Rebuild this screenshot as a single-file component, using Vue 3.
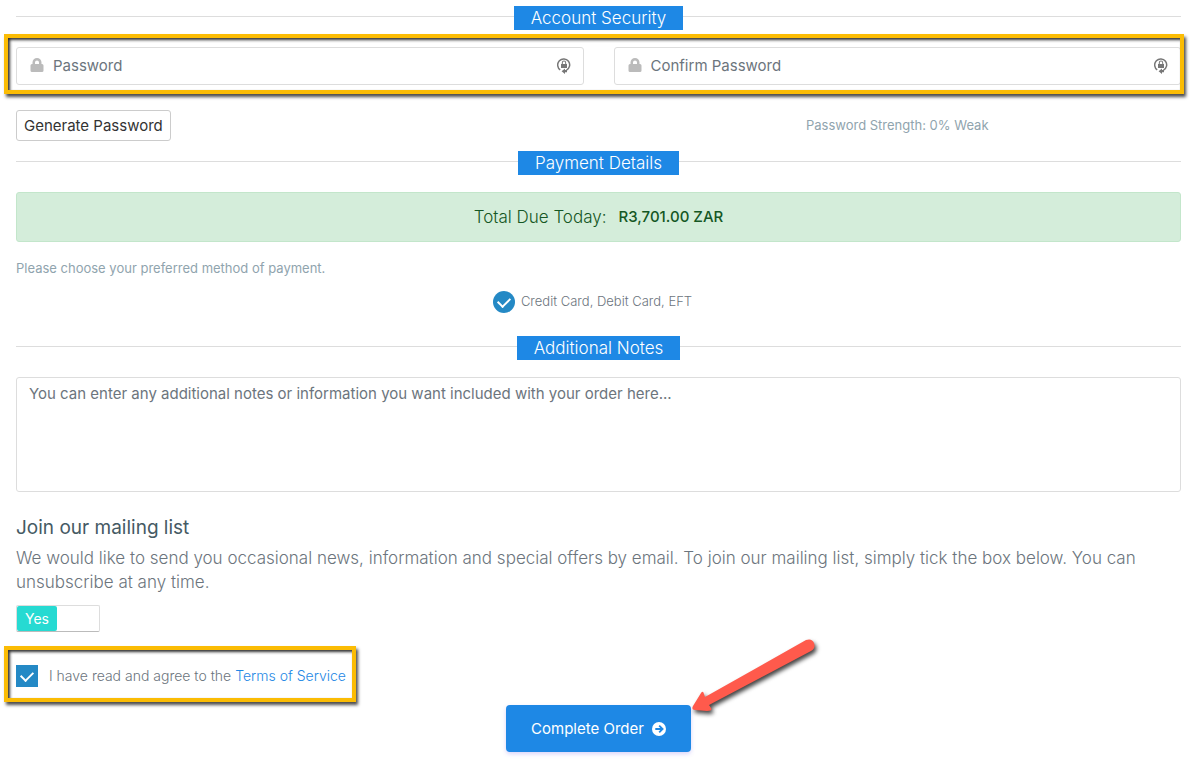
<script setup>
import { ref } from 'vue'

const password = ref('')
const confirmation = ref('')
const notes = ref('')
const mailingList = ref(true)
const agreed = ref(true)
const method = ref('card')
</script>

<template>
  <form class="checkout" @submit.prevent>
    <h2 class="heading"><span>Account Security</span></h2>
    <div class="fields highlight">
      <div class="field">
        <svg class="lock" viewBox="0 0 14 16" aria-hidden="true">
          <path d="M2.500 6V4.500a4.500 4.500 0 0 1 9 0V6h.5a1.500 1.500 0 0 1 1.500 1.500v5a1.500 1.500 0 0 1-1.500 1.500H2a1.500 1.500 0 0 1-1.500-1.500v-5A1.500 1.500 0 0 1 2 6zM5 6h4V4.500a2 2 0 0 0-4 0z" />
        </svg>
        <input v-model="password" type="password" placeholder="Password" aria-label="Password" />
        <svg class="manager" viewBox="0 0 14 18" aria-hidden="true">
          <path class="ring" d="M3.200 12.800A6 6 0 1 1 9.500 13.200" />
          <path d="M4.800 7V5.700a2.200 2.200 0 0 1 4.400 0V7h.8v4H4V7zM5.800 7h2.400V5.800a1.200 1.200 0 0 0-2.400 0z" />
          <path d="M4.600 14.200 8 11.500v1.500h2v2.200H8v1.800z" />
        </svg>
      </div>
      <div class="field">
        <svg class="lock" viewBox="0 0 14 16" aria-hidden="true">
          <path d="M2.500 6V4.500a4.500 4.500 0 0 1 9 0V6h.5a1.500 1.500 0 0 1 1.500 1.500v5a1.500 1.500 0 0 1-1.500 1.500H2a1.500 1.500 0 0 1-1.500-1.500v-5A1.500 1.500 0 0 1 2 6zM5 6h4V4.500a2 2 0 0 0-4 0z" />
        </svg>
        <input v-model="confirmation" type="password" placeholder="Confirm Password" aria-label="Confirm Password" />
        <svg class="manager" viewBox="0 0 14 18" aria-hidden="true">
          <path class="ring" d="M3.200 12.800A6 6 0 1 1 9.500 13.200" />
          <path d="M4.800 7V5.700a2.200 2.200 0 0 1 4.400 0V7h.8v4H4V7zM5.800 7h2.400V5.800a1.200 1.200 0 0 0-2.400 0z" />
          <path d="M4.600 14.200 8 11.500v1.500h2v2.200H8v1.800z" />
        </svg>
      </div>
    </div>
    <div class="strength-row">
      <div><button type="button" class="generate">Generate Password</button></div>
      <p class="strength">Password Strength: 0% Weak</p>
    </div>

    <h2 class="heading"><span>Payment Details</span></h2>
    <div class="total"><span>Total Due Today:</span><strong>R3,701.00 ZAR</strong></div>
    <p class="hint">Please choose your preferred method of payment.</p>
    <label class="method">
      <input v-model="method" type="radio" name="method" value="card" />
      <span>Credit Card, Debit Card, EFT</span>
    </label>

    <h2 class="heading"><span>Additional Notes</span></h2>
    <textarea
      v-model="notes"
      class="notes"
      aria-label="Additional Notes"
      placeholder="You can enter any additional notes or information you want included with your order here..."
    ></textarea>

    <h3 class="subheading">Join our mailing list</h3>
    <p class="copy">
      We would like to send you occasional news, information and special offers by email. To join our mailing list,
      simply tick the box below. You can unsubscribe at any time.
    </p>
    <label class="switch">
      <input v-model="mailingList" type="checkbox" aria-label="Join our mailing list" />
      <span>{{ mailingList ? 'Yes' : 'No' }}</span>
    </label>

    <div class="terms highlight">
      <input id="tos" v-model="agreed" type="checkbox" />
      <label for="tos">I have read and agree to the <a href="#terms">Terms of Service</a></label>
    </div>

    <div class="submit">
      <button type="submit">
        Complete Order
        <svg viewBox="0 0 14 14" aria-hidden="true">
          <circle cx="7" cy="7" r="7" />
          <path d="M3.300 7h7M7.200 3.600 10.600 7l-3.400 3.400" />
        </svg>
      </button>
      <svg class="arrow" viewBox="0 0 136 84" aria-hidden="true">
        <path d="M2 71 10 58Q12 55 13 59L14 62 115 5Q121 3 123 8Q125 13 120 16L18 70 20 73Q22 76 16 76L4 75Q0 75 2 71Z" />
      </svg>
    </div>
  </form>
</template>

<style>
body {
  margin: 0;
  background: #fff;
}
</style>

<style scoped>
.checkout {
  display: flex;
  flex-direction: column;
  padding: 6px 9px 14px 16px;
  font-family: Inter, "Open Sans", sans-serif;
  font-size: 15px;
  line-height: 24px;
  color: #6c757d;
}
.checkout * {
  box-sizing: border-box;
}
button,
input,
textarea {
  margin: 0;
  font: inherit;
}
h2,
h3,
p {
  margin: 0;
}
.heading {
  display: flex;
  justify-content: center;
  background: linear-gradient(#ddd, #ddd) 0 10px / 100% 1px no-repeat;
  font-size: 17px;
  font-weight: 300;
  color: #fff;
}
.heading span {
  padding: 0 17px;
  background: #1e88e5;
}
.highlight {
  position: relative;
}
.highlight::after {
  content: "";
  position: absolute;
  inset: -13px -3px -9px -12px;
  border: 4px solid #fbbc04;
  box-shadow: 2px 3px 3px #222c, inset 2px 2px 3px #111d;
  pointer-events: none;
}
.fields {
  display: grid;
  grid-template-columns: 1fr 1fr;
  gap: 30px;
  margin-top: 17px;
}
.field {
  display: flex;
  align-items: center;
  height: 38px;
  padding: 0 12px 0 13px;
  border: 1px solid #ddd;
  border-radius: 3px;
}
.field input {
  flex: 1;
  min-width: 0;
  padding: 0 9px;
  border: 0;
  outline: 0;
  background: none;
  color: #495057;
}
::placeholder {
  color: #6c757d;
  opacity: 1;
}
.lock {
  width: 14px;
  height: 16px;
  fill: #bbb;
}
.manager {
  width: 14px;
  height: 18px;
  fill: #777;
}
.ring {
  fill: none;
  stroke: #777;
  stroke-width: 1.5;
}
.strength-row {
  display: grid;
  grid-template-columns: 1fr 1fr;
  column-gap: 30px;
  margin: 25px 0 10px;
}
.generate {
  display: block;
  height: 31px;
  padding: 0 7px;
  border: 1px solid #ccc;
  border-radius: 3px;
  background: #fff;
  color: #333;
}
.strength {
  line-height: 31px;
  text-align: center;
  font-size: 13px;
  color: #90a4ae;
}
.total {
  display: flex;
  justify-content: center;
  gap: 12px;
  margin-top: 17px;
  padding: 12px;
  border: 1px solid #c3e6cb;
  border-radius: 3px;
  background: #d4edda;
  color: #155724;
  font-size: 17px;
  font-weight: 300;
}
.total strong {
  font-size: 15px;
  font-weight: 500;
}
.hint {
  margin-top: 14px;
  font-size: 13px;
  color: #90a4ae;
}
.method {
  display: flex;
  justify-content: center;
  gap: 6px;
  margin: 11px 0 23px;
  padding-right: 12px;
  line-height: 20px;
  font-size: 13px;
  font-weight: 300;
}
.method input,
.terms input {
  appearance: none;
  flex: none;
  width: 22px;
  height: 22px;
  background: #2489c5;
  display: grid;
  place-items: center;
}
.method input {
  border-radius: 50%;
}
.method input::before,
.terms input::before {
  content: "";
  width: 10px;
  height: 6px;
  margin-bottom: 3px;
  border: solid #fff;
  border-width: 0 0 2px 2px;
  rotate: -45deg;
  visibility: hidden;
}
.method input:checked::before,
.terms input:checked::before {
  visibility: visible;
}
.notes {
  height: 115px;
  margin-top: 17px;
  padding: 4px 12px;
  border: 1px solid #ddd;
  border-radius: 3px;
  resize: none;
  color: #495057;
}
.subheading {
  margin-top: 24px;
  font-size: 19px;
  font-weight: 400;
  color: #455a64;
}
.copy {
  margin-top: 6px;
  font-size: 17px;
  font-weight: 300;
}
.switch {
  position: relative;
  width: 84px;
  height: 27px;
  margin-top: 11px;
  border: 1px solid #ddd;
  border-bottom-color: #bbb;
  border-radius: 2px;
}
.switch input {
  position: absolute;
  inset: 0;
  opacity: 0;
}
.switch span {
  display: block;
  width: 40px;
  border-radius: 2px;
  background: #26dad2;
  color: #fff;
  font-size: 14px;
  line-height: 25px;
  text-align: center;
}
.terms {
  display: flex;
  align-items: center;
  align-self: flex-start;
  gap: 11px;
  height: 36px;
  margin-top: 26px;
  padding-right: 6px;
  font-size: 14px;
  font-weight: 300;
}
.terms a {
  color: #1e88e5;
  text-decoration: none;
}
.terms.highlight::after {
  inset: -12px -4px -8px -12px;
}
.submit {
  position: relative;
  align-self: center;
  margin-top: 11px;
}
.submit button {
  display: flex;
  align-items: center;
  gap: 8px;
  height: 47px;
  padding: 0 25px;
  border: 0;
  border-radius: 4px;
  background: #1e88e5;
  box-shadow: 0 2px 4px #7460ee44;
  color: #fff;
}
.submit button svg {
  width: 14px;
  height: 14px;
  fill: #fff;
}
.submit button path {
  fill: none;
  stroke: #1e88e5;
  stroke-width: 1.8;
}
.arrow {
  position: absolute;
  left: 100%;
  bottom: 33px;
  width: 136px;
  height: 84px;
  fill: #ff5a4c;
  filter: drop-shadow(2px 3px 2px #000b);
  pointer-events: none;
}
</style>
